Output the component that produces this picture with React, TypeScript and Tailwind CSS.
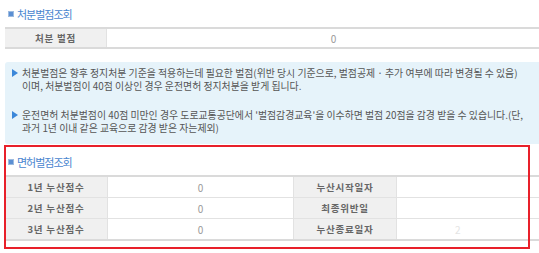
const FONT = "font-['Noto_Sans_CJK_KR','Noto_Sans',sans-serif]"

function SectionIcon() {
  return <span className="inline-block h-[6px] w-[6px] border border-[#9dbbe0] bg-[#5b8fd3]" />
}

function SectionTitle({ children }: { children: string }) {
  return (
    <div className="flex items-center gap-[3px] pl-[3px]">
      <SectionIcon />
      <span className="text-[11px] leading-[12px] tracking-[-1px] text-[#4a86cf]">{children}</span>
    </div>
  )
}

const labelCell = 'flex items-center justify-center bg-[#f0f0f0] text-[9.5px] font-bold tracking-[0.8px] text-[#666]'
const valueCell = 'flex items-center justify-center bg-white text-[10px] text-[#999]'

const notes = [
  {
    first: '처분벌점은 향후 정지처분 기준을 적용하는데 필요한 벌점(위반 당시 기준으로, 벌점공제 · 추가 여부에 따라 변경될 수 있음)',
    second: '이며, 처분벌점이 40점 이상인 경우 운전면허 정지처분을 받게 됩니다.',
  },
  {
    first: "운전면허 처분벌점이 40점 미만인 경우 도로교통공단에서 '벌점감경교육'을 이수하면 벌점 20점을 감경 받을 수 있습니다.(단,",
    second: '과거 1년 이내 같은 교육으로 감경 받은 자는제외)',
  },
]

const licenseRows = [
  { label: '1년 누산점수', value: '0', label2: '누산시작일자', value2: '' },
  { label: '2년 누산점수', value: '0', label2: '최종위반일', value2: '' },
  { label: '3년 누산점수', value: '0', label2: '누산종료일자', value2: '2' },
]

export default function App() {
  return (
    <div className={`relative h-[253px] w-[539px] overflow-hidden bg-white ${FONT}`}>
      <div className="w-[560px] pl-[5px]">
        <div className="flex h-[27px] items-center">
          <SectionTitle>처분벌점조회</SectionTitle>
        </div>

        <div className="grid h-[22px] w-[555px] grid-cols-[102px_1fr] border-y-2 border-[#dadada]">
          <div className={`${labelCell} border-r border-[#e2e2e2]`}>처분 벌점</div>
          <div className={valueCell}>0</div>
        </div>

        <div className="mt-[13px] h-[82px] rounded-[3px] bg-[#e6f3fa] pl-[7px] pt-[5px]">
          {notes.map((note, i) => (
            <div key={i} className={`flex gap-[4px] ${i > 0 ? 'mt-[16px]' : ''}`}>
              <span className="mt-[2px] h-0 w-0 shrink-0 border-y-[4px] border-l-[6px] border-y-transparent border-l-[#3b87d9]" />
              <p className="text-[9.9px] leading-[13px] text-[#555]">
                {note.first}
                <br />
                {note.second}
              </p>
            </div>
          ))}
        </div>

        <div className="flex h-[31px] items-end pb-[7px]">
          <SectionTitle>면허벌점조회</SectionTitle>
        </div>

        <div className="w-[555px] border-y-2 border-[#dadada]">
          {licenseRows.map((row, i) => (
            <div
              key={row.label}
              className={`grid h-[20px] grid-cols-[103px_185px_104px_1fr] ${i > 0 ? 'box-content border-t border-[#e2e2e2]' : ''}`}
            >
              <div className={`${labelCell} border-r border-[#e2e2e2]`}>{row.label}</div>
              <div className={valueCell}>{row.value}</div>
              <div className={`${labelCell} border-x border-[#e2e2e2]`}>{row.label2}</div>
              <div className="flex items-center bg-white pl-[58px] text-[10px] text-[#e4e4e4]">{row.value2}</div>
            </div>
          ))}
        </div>
      </div>

      {/* highlight annotation */}
      <div className="pointer-events-none absolute left-[4px] top-[145px] h-[104px] w-[526px] border-2 border-[#e8202a]" />
    </div>
  )
}
